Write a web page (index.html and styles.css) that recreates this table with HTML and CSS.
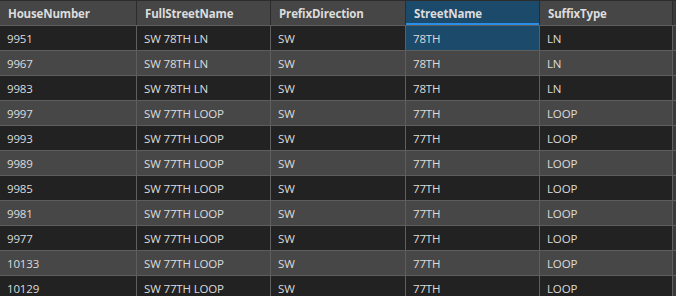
FILE: index.html
```html
<!DOCTYPE html>
<html>
<head>
<meta charset="utf-8">
<link rel="stylesheet" href="styles.css">
</head>
<body>
<div class="grid">
  <div class="row head">
    <div class="cell c1">HouseNumber</div>
    <div class="cell c2">FullStreetName</div>
    <div class="cell c3">PrefixDirection</div>
    <div class="cell c4 sel">StreetName</div>
    <div class="cell c5">SuffixType</div>
    <div class="cell tail"></div>
  </div>
  <div class="row dark">
    <div class="cell c1">9951</div><div class="cell c2">SW 78TH LN</div><div class="cell c3">SW</div><div class="cell c4 sel">78TH</div><div class="cell c5">LN</div><div class="cell tail"></div>
  </div>
  <div class="row light">
    <div class="cell c1">9967</div><div class="cell c2">SW 78TH LN</div><div class="cell c3">SW</div><div class="cell c4">78TH</div><div class="cell c5">LN</div><div class="cell tail"></div>
  </div>
  <div class="row dark">
    <div class="cell c1">9983</div><div class="cell c2">SW 78TH LN</div><div class="cell c3">SW</div><div class="cell c4">78TH</div><div class="cell c5">LN</div><div class="cell tail"></div>
  </div>
  <div class="row light">
    <div class="cell c1">9997</div><div class="cell c2">SW 77TH LOOP</div><div class="cell c3">SW</div><div class="cell c4">77TH</div><div class="cell c5">LOOP</div><div class="cell tail"></div>
  </div>
  <div class="row dark">
    <div class="cell c1">9993</div><div class="cell c2">SW 77TH LOOP</div><div class="cell c3">SW</div><div class="cell c4">77TH</div><div class="cell c5">LOOP</div><div class="cell tail"></div>
  </div>
  <div class="row light">
    <div class="cell c1">9989</div><div class="cell c2">SW 77TH LOOP</div><div class="cell c3">SW</div><div class="cell c4">77TH</div><div class="cell c5">LOOP</div><div class="cell tail"></div>
  </div>
  <div class="row dark">
    <div class="cell c1">9985</div><div class="cell c2">SW 77TH LOOP</div><div class="cell c3">SW</div><div class="cell c4">77TH</div><div class="cell c5">LOOP</div><div class="cell tail"></div>
  </div>
  <div class="row light">
    <div class="cell c1">9981</div><div class="cell c2">SW 77TH LOOP</div><div class="cell c3">SW</div><div class="cell c4">77TH</div><div class="cell c5">LOOP</div><div class="cell tail"></div>
  </div>
  <div class="row dark">
    <div class="cell c1">9977</div><div class="cell c2">SW 77TH LOOP</div><div class="cell c3">SW</div><div class="cell c4">77TH</div><div class="cell c5">LOOP</div><div class="cell tail"></div>
  </div>
  <div class="row light">
    <div class="cell c1">10133</div><div class="cell c2">SW 77TH LOOP</div><div class="cell c3">SW</div><div class="cell c4">77TH</div><div class="cell c5">LOOP</div><div class="cell tail"></div>
  </div>
  <div class="row dark">
    <div class="cell c1">10129</div><div class="cell c2">SW 77TH LOOP</div><div class="cell c3">SW</div><div class="cell c4">77TH</div><div class="cell c5">LOOP</div><div class="cell tail"></div>
  </div>
</div>
</body>
</html>
```

FILE: styles.css
```css
html, body {
  margin: 0;
  padding: 0;
  background: #222222;
  overflow: hidden;
}
.grid {
  display: flex;
  flex-direction: column;
  font-family: "Open Sans", "Noto Sans", sans-serif;
  font-size: 11.5px;
  letter-spacing: -0.15px;
  color: #dcdcdc;
  border-top: 1px solid #2c2c2c;
}
.row {
  display: grid;
  grid-template-columns: 137px 134px 135px 134px 133px 1fr;
  height: 25px;
  box-sizing: border-box;
  border-bottom: 1px solid #5e5e5e;
}
.cell {
  display: flex;
  align-items: center;
  padding-left: 7px;
  border-right: 1px solid #5e5e5e;
  white-space: nowrap;
  overflow: hidden;
}
.tail {
  border-right: none;
  padding: 0;
}
.head {
  background: #464646;
  font-weight: 700;
  letter-spacing: -0.15px;
}
.head .cell {
  border-right-color: #2c2c2c;
  padding-left: 8px;
}
.head .sel {
  background: #1b4a6b;
  box-shadow: inset 0 -2px 0 #2a8ee6;
}
.dark { background: #222222; }
.light { background: #474747; }
.row .sel { background: #1b4a6b; }
.head .tail { background: #3a3a3a; }
.row .tail { background: #3a3a3a; }
```
